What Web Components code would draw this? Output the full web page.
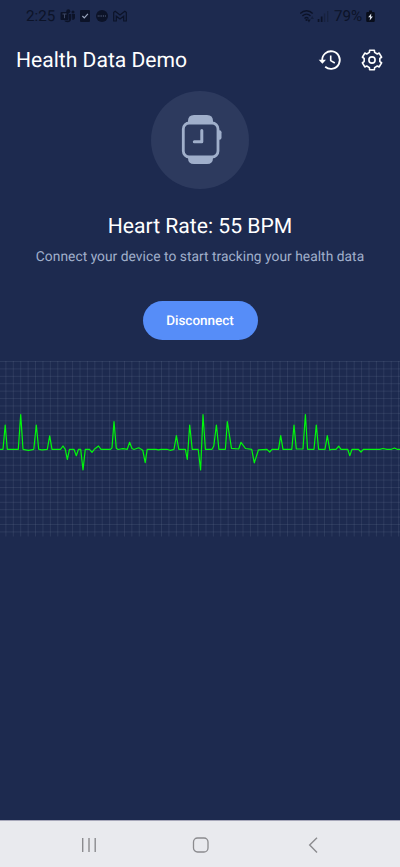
<!DOCTYPE html>
<html lang="en">
<head>
<meta charset="utf-8">
<title>Health Data Demo</title>
<style>
html,body{margin:0;height:100%;background:#1d2a4f;font-family:Roboto,"Liberation Sans",sans-serif;overflow:hidden;text-rendering:geometricPrecision}
</style>
</head>
<body>
<health-app></health-app>
<script>
const define = (name, html) => customElements.define(name, class extends HTMLElement {
  constructor() {
    super();
    const t = document.createElement('template');
    t.innerHTML = html;
    this.attachShadow({mode: 'open'}).append(t.content.cloneNode(true));
  }
});

define('status-bar', `
<style>
:host{display:flex;height:32px;box-sizing:border-box;padding:0 25px 0 26px;align-items:center;justify-content:space-between;color:#0c1328;font-size:15.2px}
div{display:flex;align-items:center}
svg{display:block}
.time{width:30px;margin-right:4px}
.pct{width:31px;margin:0 1px 0 4px}
</style>
<div><span class="time">2:25</span>
<svg width="68" height="16" viewBox="0 0 68 16" fill="#0c1328">
 <path d="M9 6h2.300v4.200c0 2.500-1.500 4-3.700 4-1.700 0-2.900-.7-3.300-1.700H9zM12 6h3v3.500c0 1.700-1 2.600-2.700 2.500z"/>
 <rect x=".5" y="4" width="8" height="8" rx="1"/><circle cx="8.300" cy="3.200" r="2"/><circle cx="13" cy="4" r="1.500"/>
 <path d="M2.500 6h4M4.500 6v4.200" stroke="#3d4866" stroke-width="1"/>
 <rect x="20" y="2" width="10" height="12" rx="1"/><path d="m22.400 8 1.900 1.900 3.600-4" fill="none" stroke="#9aa5bc" stroke-width="1.200"/>
 <circle cx="42" cy="8" r="6"/><path d="M38.200 7v2M40 7v2M41.700 7v2M43.500 7v2M45.400 7v2" stroke="#45506d" stroke-width=".7"/>
 <path d="M53.700 13V4.300L55.200 3.200 60 7l4.800-3.800 1.500 1.100V13h-2.600V8.200L60 11 56.300 8.200V13z" fill="none" stroke="#0c1328" stroke-width="1.200"/>
</svg></div>
<div><svg width="30" height="16" viewBox="0 0 30 16">
 <g fill="none" stroke="#0c1328" stroke-width="1.300"><path d="M.2 5.500C3.700 1.800 9.300 1.800 12.700 5.500M2.400 8c2.400-2.400 5.900-2.400 8.100 0M4.500 10.400c1.300-1.100 2.800-1.100 4 0"/></g>
 <circle cx="6.500" cy="12" r="1.100" fill="#0c1328"/><path d="M7.200 11.500h3.500l-1.750 3z" fill="#0c1328"/><path d="M10.500 11l1.700-3 1.700 3z" fill="#141f3c"/>
 <path d="M17.700 11h1.700v3h-1.700zM20.800 8.500h1.700V14h-1.700z" fill="#0c1328"/><path d="M23.900 5.500h1.300V14h-1.300zM27 3h1.300v11h-1.300z" fill="#17223f"/>
</svg><span class="pct">79%</span>
<svg width="9" height="14" viewBox="0 0 9 14"><path d="M3 1.500h3V3h1.500q1.300 0 1.300 1.200v7.600q0 1.200-1.300 1.200H1.500Q.2 13 .2 11.800V4.200Q.2 3 1.500 3H3z" fill="#080d1b"/><path d="M5.300 4.500 2.200 8.300h1.900L3.700 11.500l3.200-4H5z" fill="#e2e7f1"/></svg></div>`);

define('app-header', `
<style>
:host{display:flex;height:55px;align-items:center;padding:0 16.5px 0 16px;justify-content:space-between;color:#fff}
h1{font:400 21.1px Roboto,sans-serif;margin:0;padding-top:1px;white-space:nowrap}
div{display:flex;gap:18px}
svg{display:block}
</style>
<h1><slot></slot></h1>
<div>
<svg width="24" height="24" viewBox="0 0 24 24" fill="none" stroke="#fff" stroke-width="1.800"><path d="M4.200 12.500A8.800 8.800 0 1 1 7.200 18.700"/><path d="M.7 11.800h7.300l-3.600 3.900z" fill="#fff" stroke="none"/><path d="M12.700 7.500v5.100l4.100 2.400" stroke-width="1.600"/></svg>
<svg width="24" height="24" viewBox="0 0 24 24" fill="none" stroke="#fff" stroke-width="1.600" stroke-linejoin="round"><path d="M9.600 2.300h4.800L14.600 4.430 17.250 5.960 19.200 5.050 21.600 9.240 19.850 10.470V13.530L21.600 14.760 19.200 18.950 17.250 18.040 14.600 19.570 14.400 21.700H9.600L9.400 19.570 6.750 18.040 4.800 18.950 2.400 14.760 4.150 13.530V10.470L2.400 9.240 4.800 5.050 6.750 5.960 9.400 4.430z"/><circle cx="12" cy="12" r="3.100"/></svg>
</div>`);

define('watch-badge', `
<style>
:host{display:block;width:98px;height:98px;border-radius:50%;background:#2d3a5e}
svg{display:block}
</style>
<svg width="98" height="98" viewBox="0 0 98 98">
<g fill="#a0afcb"><path d="M37 33v-3q0-6 6-6h13q6 0 6 6v3zM37 66v1q0 6 6 6h13q6 0 6-6v-1z"/><rect x="65" y="39.300" width="5.500" height="9.500" rx="2"/></g>
<rect x="32.300" y="32" width="34.700" height="34" rx="6" fill="#2d3a5e" stroke="#a0afcb" stroke-width="2.800"/>
<path d="M50.800 39.500v11.300h-7.500" fill="none" stroke="#a0afcb" stroke-width="3" stroke-linecap="round" stroke-linejoin="round"/>
</svg>`);

define('pill-button', `
<style>
:host{display:block}
button{display:block;width:115px;height:39px;border:0;border-radius:20px;padding:0;background:#568df8;color:#fff;font:500 13.5px Roboto,sans-serif;text-rendering:geometricPrecision}
</style>
<button><slot></slot></button>`);

define('heart-panel', `
<style>
:host{display:flex;flex-direction:column;align-items:center;height:270px;padding-top:4px;box-sizing:content-box}
h2{font:400 21.15px/28px Roboto,sans-serif;color:#fff;margin:24px 0 0}
p{font-size:13.8px;line-height:20px;color:#a0afcb;margin:6px 0 34px;letter-spacing:.03px;white-space:nowrap}
</style>
<watch-badge></watch-badge>
<h2><slot name="rate"></slot></h2>
<p><slot name="hint"></slot></p>
<pill-button>Disconnect</pill-button>`);

define('ecg-chart', `
<style>:host{display:block;height:176px}svg{display:block}</style>
<svg width="400" height="176" viewBox="0 361 400 176">
<g id="grid" stroke="#6c7b98" stroke-opacity=".27" stroke-width=".8"></g>
<path fill="none" stroke="#00f80b" stroke-width="1.200" stroke-linejoin="round" d="M0 449.300H3L5.200 425 7.300 449.300H18.300L20.700 414.500 23 449.300 28.500 450.300 33.800 449.300 36.300 425 38.700 449.300 42 449.800 47.300 449.300 49.700 435.800 52 449.300H60.500L63 446 65.300 449.300 67.300 459.500 69.500 449.300H74L76.300 455.700 78.500 449.300H80.700L83 470 85.300 449.300H89.500L92 452.300 94.300 449.300 98.500 446 101 449.300H110.500L112 447.800 114 421.500 116.300 448.300 118 449.500 123 448.700 127.300 449.300 129.600 442.300 132 448.500 134 449.500 138.700 447.800 142.800 450.300 145.200 462.700 147.200 449.300H156L158.500 449.800 161 449.300H167L170 450.300 174 449.300 176.400 435.600 178.800 449.300H185.400L187.300 459.500 189.700 425 192.200 449.300H198.200L200.600 470 203 414.500 205.400 449.300H212L213.800 446 216.400 425 218.900 449.300H225.400L227.300 421.500 231.500 448.300 238.700 449 241 442.300 245.500 448.500 251.700 449.300 254.300 462.800 258.500 449.800 267 449.300 269.700 452 272 449.300H278.500L280.700 435.700 283 449.300H291.800L294 425 296.300 449H303L305.400 414.500 307.600 449.300H314L316.300 425 318.600 449.300H325L327.300 435.700 329.800 450 332 449.300H336L338.700 446.200 341 449.300H347.700L349.800 455.700 352 449.300H358.500L361 452 363.300 449.300H380L383 448.500 387 449.300H391.500L394.500 448 397 449.300H400"/>
</svg>`);

define('nav-bar', `
<style>
:host{display:flex;height:47px;box-sizing:border-box;background:#e9eaee;border-top:1px solid #a7a8ba;justify-content:space-between;align-items:center;padding:1px 78px 0 80px}
svg{display:block}
</style>
<svg width="18" height="18" fill="#8b8b8e"><path d="M2 2h1.400v14H2zM8.300 2h1.400v14H8.300zM14.500 2h1.400v14h-1.400z"/></svg>
<svg width="18" height="18" fill="none" stroke="#8b8b8e" stroke-width="1.300"><rect x="1.500" y="2" width="14.500" height="14" rx="4"/></svg>
<svg width="18" height="18" fill="none" stroke="#8b8b8e" stroke-width="1.400"><path d="M13 1.800 5.700 9l7.300 7.400"/></svg>`);

define('health-app', `
<style>
:host{display:flex;flex-direction:column;width:400px;height:867px;background:#1d2a4f}
nav-bar{margin-top:auto}
</style>
<status-bar></status-bar>
<app-header>Health Data Demo</app-header>
<heart-panel><span slot="rate">Heart Rate: 55 BPM</span><span slot="hint">Connect your device to start tracking your health data</span></heart-panel>
<ecg-chart></ecg-chart>
<nav-bar></nav-bar>`);

// Chart grid: 54 vertical and 24 horizontal lines
const chart = document.querySelector('health-app').shadowRoot.querySelector('ecg-chart').shadowRoot;
let d = '';
for (let i = 0; i < 54; i++) d += `M${(5.9 + i * 7.41).toFixed(2)} 361v175.5`;
for (let i = 0; i < 24; i++) d += `M0 ${(361.5 + i * 7.41).toFixed(2)}H400`;
const path = document.createElementNS('http://www.w3.org/2000/svg', 'path');
path.setAttribute('d', d);
chart.getElementById('grid').append(path);
</script>
</body>
</html>
